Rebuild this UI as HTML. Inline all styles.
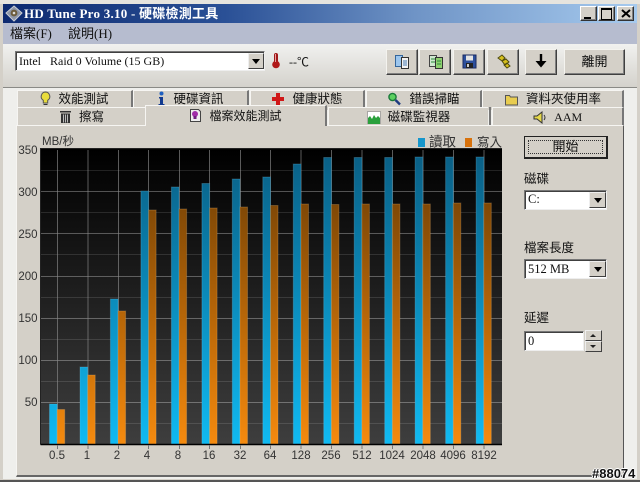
<!DOCTYPE html>
<html><head><meta charset="utf-8"><style>
html,body{margin:0;padding:0;width:640px;height:482px;overflow:hidden;background:#d4d0c8}
body{position:relative;font-family:"Liberation Serif","Noto Sans CJK TC",serif;font-size:12px;color:#111}
.a{position:absolute}
.t{position:absolute;white-space:nowrap;line-height:14px}
.btn{position:absolute;background:#d4d0c8;box-sizing:border-box;border:1px solid;border-color:#f4f3ef #404040 #404040 #f4f3ef;box-shadow:inset -1px -1px 0 #808080}
.tab{position:absolute;background:#d4d0c8;box-sizing:border-box;border-left:1px solid #f6f5f2;border-top:1px solid #f6f5f2;border-right:2px solid #777;text-align:center;line-height:17px;font-size:12.5px;white-space:nowrap}
.tab svg{vertical-align:-3px;margin-right:4px}
.r2{line-height:19px}
.inp{position:absolute;background:#fff;box-sizing:border-box;border:1px solid;border-color:#777 #eee #eee #777;box-shadow:inset 1px 1px 0 #404040;padding-left:3px;font-size:12.5px;line-height:16px;white-space:nowrap}
.arr{position:absolute;background:#d4d0c8;box-sizing:border-box;border:1px solid;border-color:#eee #404040 #404040 #eee}
.dn:after{content:"";position:absolute;left:50%;top:50%;margin:-2px 0 0 -4px;border:4px solid transparent;border-top:5px solid #000;border-bottom:0}
.tri{position:absolute;width:0;height:0;border-left:3px solid transparent;border-right:3px solid transparent}
</style></head><body>
<div class="a" style="left:0;top:0;width:640px;height:4px;background:#e6e4de"></div>
<div class="a" style="left:3px;top:4px;width:634px;height:19px;background:linear-gradient(90deg,#0d2a70 0,#2a5096 35%,#6f94c6 65%,#a6caee 100%)"></div>
<div class="a" style="left:3px;top:23px;width:634px;height:21px;background:#b6bccf"></div>
<div class="a" style="left:3px;top:44px;width:634px;height:43px;background:linear-gradient(#f1f1ef,#d4d2cc)"></div>
<div class="a" style="left:3px;top:87px;width:634px;height:392px;background:#efefec"></div>
<div class="a" style="left:3px;top:87px;width:634px;height:1px;background:#8a8a86"></div>

<!-- title -->
<svg class="a" style="left:5px;top:5px" width="18" height="17" viewBox="0 0 18 17"><path d="M9 1 17 8 9 16 1 8Z" fill="#8e97a8" stroke="#c9cdd3"/><circle cx="9" cy="8" r="3.4" fill="#6d5d3c"/><circle cx="9" cy="8" r="1.3" fill="#ddd"/></svg>
<div class="t" style="left:24px;top:7px;font-size:13px;font-weight:bold;color:#fff;font-family:'Liberation Serif','Noto Sans CJK TC',serif;letter-spacing:.25px">HD Tune Pro 3.10 - 硬碟檢測工具</div>
<div class="btn" style="left:580px;top:6px;width:17px;height:15px;border-color:#fff #333 #333 #fff"><div class="a" style="left:3px;top:10px;width:7px;height:2px;background:#000"></div></div>
<div class="btn" style="left:598px;top:6px;width:17px;height:15px;border-color:#fff #333 #333 #fff"><div class="a" style="left:2px;top:1px;width:9px;height:9px;border:1px solid #000;border-top-width:2px"></div></div>
<div class="btn" style="left:617px;top:6px;width:17px;height:15px;border-color:#fff #333 #333 #fff"><svg class="a" style="left:3px;top:2px" width="10" height="9"><path d="M1 1 9 8M9 1 1 8" stroke="#000" stroke-width="2"/></svg></div>
<!-- menu -->
<div class="t" style="left:10px;top:27px;font-size:13px;color:#111">檔案(F)</div>
<div class="t" style="left:68px;top:27px;font-size:13px;color:#111">說明(H)</div>

<!-- toolbar -->
<div class="inp" style="left:15px;top:51px;width:250px;height:20px;padding-top:1px;font-size:12px">Intel &nbsp; Raid 0 Volume (15 GB)</div>
<div class="arr dn" style="left:248px;top:53px;width:16px;height:16px"></div>
<svg class="a" style="left:271px;top:52px" width="10" height="17"><rect x="3" y="1" width="4" height="11" rx="2" fill="#a01818"/><circle cx="5" cy="12.500" r="3.800" fill="#b01818"/><rect x="4" y="2" width="1" height="8" fill="#e8a0a0"/></svg>
<div class="t" style="left:289px;top:55px;font-size:12px">--℃</div>
<div class="btn" style="left:386px;top:49px;width:32px;height:26px"></div>
<div class="btn" style="left:419px;top:49px;width:32px;height:26px"></div>
<div class="btn" style="left:453px;top:49px;width:32px;height:26px"></div>
<div class="btn" style="left:487px;top:49px;width:32px;height:26px"></div>
<div class="btn" style="left:525px;top:49px;width:32px;height:26px"></div>
<div class="btn" style="left:564px;top:49px;width:61px;height:26px;text-align:center;line-height:23px;font-size:13px">離開</div>
<svg class="a" style="left:394px;top:54px" width="18" height="16"><rect x="1.500" y="1.500" width="7" height="11" fill="#9cc6ee" stroke="#34669c"/><rect x="7.500" y="3.500" width="7" height="11" fill="#f3f3f3" stroke="#333"/><path d="M9 7h4M9 9h4M9 11h4" stroke="#4678b0"/></svg>
<svg class="a" style="left:428px;top:54px" width="18" height="16"><rect x="1.500" y="1.500" width="7" height="11" fill="#cfe8cf" stroke="#444"/><rect x="7.500" y="3.500" width="7" height="11" fill="#8ed070" stroke="#333"/><path d="M3 5h4M3 8h4M9 7h4M9 10h4" stroke="#2a8a3a"/></svg>
<svg class="a" style="left:462px;top:54px" width="16" height="16"><rect x="1" y="1" width="13" height="13" fill="#2c4f9c" stroke="#1a2a60"/><rect x="4" y="1.500" width="7" height="5" fill="#e4e4e4"/><rect x="4" y="9" width="7" height="5" fill="#222"/><rect x="5" y="10" width="2" height="3" fill="#ccc"/></svg>
<svg class="a" style="left:495px;top:53px" width="18" height="17"><path d="M3 5 7 2 10 5 7 8ZM7 8l4-2 3 3-4 3ZM9 12l3-2 3 3-3 2Z" fill="#d6c01c" stroke="#4e4a10"/></svg>
<svg class="a" style="left:534px;top:53px" width="14" height="16"><path d="M7 1V13" stroke="#000" stroke-width="2.400"/><path d="M1.500 8 7 14.500 12.500 8Z" fill="#000"/></svg>

<!-- tab rows -->
<div class="tab" style="left:17px;top:90px;width:116px;height:20px"><svg width="11" height="15"><path d="M5.500 1a4.500 4.500 0 0 1 2.200 8.300V12H3.300V9.300A4.500 4.500 0 0 1 5.500 1Z" fill="#e8dc3c" stroke="#555"/><path d="M3.500 13.500h4" stroke="#333"/></svg> 效能測試</div>
<div class="tab" style="left:133px;top:90px;width:116px;height:20px"><svg width="9" height="15"><circle cx="4.500" cy="2.500" r="2" fill="#1e5fc0"/><path d="M2 6h4v7h1.500v1.500h-6V13H3V7.500H2Z" fill="#123a90"/></svg> 硬碟資訊</div>
<div class="tab" style="left:250px;top:90px;width:115px;height:20px"><svg width="14" height="14"><path d="M5 1h4v4h4v4H9v4H5V9H1V5h4Z" fill="#d01818"/></svg> 健康狀態</div>
<div class="tab" style="left:366px;top:90px;width:116px;height:20px"><svg width="15" height="14"><circle cx="5.500" cy="5" r="3.600" fill="#5cd060" stroke="#1a7a3a" stroke-width="1.400"/><path d="M8.500 8 13 12.500" stroke="#1d3a80" stroke-width="2.400"/></svg> 錯誤掃瞄</div>
<div class="tab" style="left:482px;top:90px;width:142px;height:20px"><svg width="15" height="14"><path d="M1.500 3.500h4l1 1.500h7v8h-12Z" fill="#e8cc50" stroke="#555"/></svg> 資料夾使用率</div>

<div class="tab r2" style="left:17px;top:107px;width:128px;height:19px;border-right:0"><svg width="13" height="15"><path d="M1 2h11v1.500H1ZM2 4.500h9V14H2Z" fill="#333"/><path d="M4.500 5.500v8M6.500 5.500v8M8.500 5.500v8" stroke="#bbb"/></svg> 擦寫</div>
<div class="tab r2" style="left:328px;top:107px;width:160px;height:19px;border-right:0"><svg width="14" height="13"><path d="M.5 12.500V.5h13v12Z" fill="#fff" stroke="#666" stroke-width=".5"/><path d="M1 13V7l2-2 2 3 2-4 2 3 2-2 2 2v6Z" fill="#2aa03c"/></svg> 磁碟監視器</div>
<div class="a" style="left:489px;top:107px;width:2px;height:19px;background:#777"></div>
<div class="tab r2" style="left:492px;top:107px;width:132px;height:19px;font-size:12px"><svg width="15" height="13"><path d="M1 5h3l5-4v11L4 8H1Z" fill="#e6d84a" stroke="#333"/><path d="M11 4q2 2.500 0 5" stroke="#333" fill="none"/></svg> AAM</div>
<div class="a" style="left:16px;top:125px;width:608px;height:352px;background:#d4d0c8;border-top:1px solid #f6f5f2;border-left:1px solid #f6f5f2;border-right:1px solid #555;border-bottom:2px solid #666;box-sizing:border-box"></div>
<div class="tab" style="left:145px;top:105px;width:182px;height:21px;z-index:2;line-height:20px;font-size:12px"><svg width="13" height="15"><path d="M1.500 1.500h8l2 2v10h-10Z" fill="#eee" stroke="#444"/><circle cx="6" cy="6" r="3" fill="#a02da8"/><rect x="4.500" y="8" width="3" height="3" fill="#702080"/></svg> 檔案效能測試</div>

<!-- chart -->
<svg class="a" style="left:0;top:0" width="640" height="482">
<defs>
<linearGradient id="bg" gradientUnits="userSpaceOnUse" x1="0" y1="149" x2="0" y2="444"><stop offset="0" stop-color="#000"/><stop offset="1" stop-color="#3e3e3e"/></linearGradient>
<linearGradient id="b" gradientUnits="userSpaceOnUse" x1="0" y1="157" x2="0" y2="444"><stop offset="0" stop-color="#0a6086"/><stop offset=".5" stop-color="#0b8cbc"/><stop offset="1" stop-color="#10baf2"/></linearGradient>
<linearGradient id="o" gradientUnits="userSpaceOnUse" x1="0" y1="204" x2="0" y2="444"><stop offset="0" stop-color="#804806"/><stop offset=".5" stop-color="#ba6808"/><stop offset="1" stop-color="#f58a0e"/></linearGradient>
</defs>
<rect x="41" y="149" width="461" height="295" fill="url(#bg)"/>
<g stroke="#fff" stroke-opacity=".12"><path d="M41 170.500H502M41 212.500H502M41 254.500H502M41 297.500H502M41 339.500H502M41 381.500H502M41 423.500H502"/></g>
<g stroke="#fff" stroke-opacity=".3"><path d="M41 191.500H502M41 233.500H502M41 276.500H502M41 318.500H502M41 360.500H502M41 402.500H502"/></g>
<g stroke="#8a8a8a" stroke-opacity=".65"><path d="M57.500 150V449M88 150V449M118.500 150V449M148.500 150V449M179.500 150V449M209.500 150V449M240.500 150V449M270.500 150V449M301 150V449M331.500 150V449M362 150V449M392.500 150V449M423 150V449M453.500 150V449M484 150V449"/></g>
<g fill="url(#b)" stroke="#7fd0f0" stroke-opacity=".25">
<rect x="49.500" y="404" width="7.700" height="40"/><rect x="80" y="367" width="7.700" height="77"/><rect x="110.400" y="299" width="7.700" height="145"/><rect x="140.900" y="191" width="7.700" height="253"/><rect x="171.400" y="187" width="7.700" height="257"/><rect x="201.900" y="183.500" width="7.700" height="260.500"/><rect x="232.300" y="179" width="7.700" height="265"/><rect x="262.800" y="177" width="7.700" height="267"/><rect x="293.300" y="164" width="7.700" height="280"/><rect x="323.700" y="157.500" width="7.700" height="286.500"/><rect x="354.200" y="157.500" width="7.700" height="286.500"/><rect x="384.700" y="157.500" width="7.700" height="286.500"/><rect x="415.100" y="157" width="7.700" height="287"/><rect x="445.600" y="157" width="7.700" height="287"/><rect x="476.100" y="157" width="7.700" height="287"/>
</g>
<g fill="url(#o)" stroke="#f0c080" stroke-opacity=".25">
<rect x="57.200" y="409.500" width="7.500" height="34.500"/><rect x="87.700" y="375" width="7.500" height="69"/><rect x="118.100" y="311" width="7.500" height="133"/><rect x="148.600" y="210" width="7.500" height="234"/><rect x="179.100" y="209" width="7.500" height="235"/><rect x="209.600" y="208" width="7.500" height="236"/><rect x="240" y="207" width="7.500" height="237"/><rect x="270.500" y="205.500" width="7.500" height="238.500"/><rect x="301" y="204" width="7.500" height="240"/><rect x="331.400" y="204.500" width="7.500" height="239.500"/><rect x="361.900" y="204" width="7.500" height="240"/><rect x="392.400" y="204" width="7.500" height="240"/><rect x="422.800" y="204" width="7.500" height="240"/><rect x="453.300" y="203" width="7.500" height="241"/><rect x="483.800" y="203" width="7.500" height="241"/>
</g>
<path d="M40.500 444.500V148.500H502" fill="none" stroke="#222"/>
<path d="M40.500 444.500H502" stroke="#000" stroke-width="1.400"/>
<path d="M57.500 445V449M88 445V449M118.500 445V449M148.500 445V449M179.500 445V449M209.500 445V449M240.500 445V449M270.500 445V449M301 445V449M331.500 445V449M362 445V449M392.500 445V449M423 445V449M453.500 445V449M484 445V449" stroke="#777"/>
<g font-family="Liberation Sans" font-size="11.500" fill="#333" text-anchor="end">
<text x="37.500" y="154">350</text><text x="37.500" y="196">300</text><text x="37.500" y="238">250</text><text x="37.500" y="280">200</text><text x="37.500" y="322">150</text><text x="37.500" y="364">100</text><text x="37.500" y="406">50</text>
</g>
<g font-family="Liberation Sans" font-size="11.500" fill="#333" text-anchor="middle">
<text x="57" y="459">0.5</text><text x="87" y="459">1</text><text x="117" y="459">2</text><text x="147" y="459">4</text><text x="178" y="459">8</text><text x="209" y="459">16</text><text x="240" y="459">32</text><text x="270" y="459">64</text><text x="301" y="459">128</text><text x="331" y="459">256</text><text x="362" y="459">512</text><text x="392" y="459">1024</text><text x="423" y="459">2048</text><text x="453" y="459">4096</text><text x="484" y="459">8192</text>
</g>
<text x="42" y="145" font-family="'Liberation Sans','Noto Sans CJK TC',sans-serif" font-size="11.500" fill="#333">MB/秒</text>
<rect x="418" y="138" width="7" height="9" fill="#1596cc"/><rect x="465" y="138" width="7" height="9" fill="#d8720c"/>
<text x="429" y="146.500" font-family="'Noto Sans CJK TC',sans-serif" font-size="13.500" fill="#333">讀取</text>
<text x="477" y="146.500" font-family="'Noto Sans CJK TC',sans-serif" font-size="12.500" fill="#333">寫入</text>
</svg>

<!-- right controls -->
<div class="a" style="left:524px;top:136px;width:84px;height:23px;box-sizing:border-box;background:#d4d0c8;border:1px solid #222;border-right-width:2px;border-bottom-width:2px;text-align:center;line-height:19px;font-size:13px"><div class="a" style="left:3px;top:3px;right:3px;bottom:3px;border:1px dotted #333"></div>開始</div>
<div class="t" style="left:524px;top:172px;font-size:12.500px">磁碟</div>
<div class="inp" style="left:524px;top:190px;width:83px;height:20px">C:</div>
<div class="arr dn" style="left:589px;top:192px;width:17px;height:16px"></div>
<div class="t" style="left:524px;top:241px;font-size:12.500px">檔案長度</div>
<div class="inp" style="left:524px;top:259px;width:83px;height:20px;padding-top:1px">512 MB</div>
<div class="arr dn" style="left:589px;top:261px;width:17px;height:16px"></div>
<div class="t" style="left:524px;top:311px;font-size:12.500px">延遲</div>
<div class="inp" style="left:524px;top:331px;width:60px;height:20px;padding-top:1px">0</div>
<div class="arr" style="left:585px;top:330px;width:17px;height:11px"></div>
<div class="arr" style="left:585px;top:341px;width:17px;height:11px"></div>
<div class="tri" style="left:590px;top:334px;border-bottom:3px solid #222"></div>
<div class="tri" style="left:590px;top:345px;border-top:3px solid #222"></div>

<div class="a" style="left:0;top:480px;width:640px;height:2px;background:#555"></div>
<div class="t" style="left:592px;top:467px;font-family:'Liberation Sans',sans-serif;font-size:13px;font-weight:bold;color:#111;text-shadow:1px 0 0 #fff,-1px 0 0 #fff,0 1px 0 #fff,0 -1px 0 #fff">#88074</div>
</body></html>
